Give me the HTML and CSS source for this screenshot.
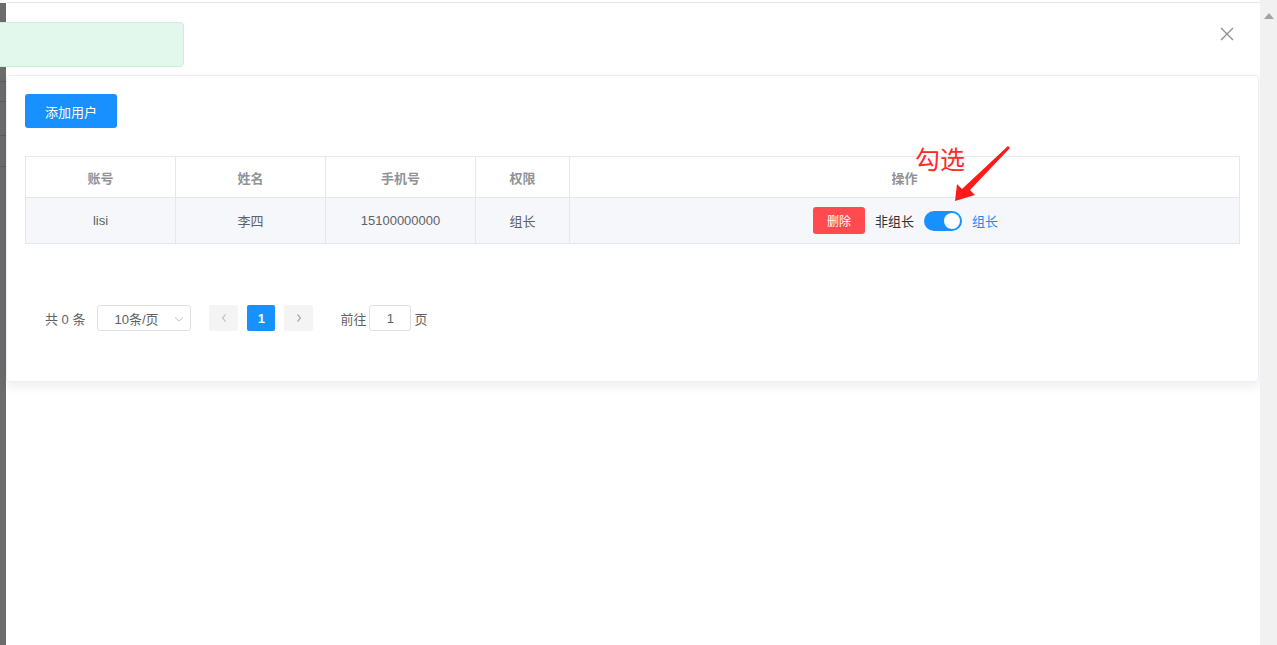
FILE: index.html
```html
<!DOCTYPE html>
<html>
<head>
    <meta charset="utf-8">
    <title>用户管理</title>
    <link rel="stylesheet" href="styles.css">
</head>
<body>
    <div class="edgeStrip">
        <div class="edgeLine" style="height:78px"></div>
        <div class="edgeLine" style="height:19px"></div>
        <div class="edgeLine" style="height:33px"></div>
        <div class="edgeLine" style="height:30px"></div>
    </div>

    <div class="dialog">
        <div class="dialogHeader">
            <span class="closeBtn">
                <svg width="14" height="14" viewBox="0 0 14 14"><path d="M1 1L13 13M13 1L1 13" stroke="#8a8d93" stroke-width="1.3" fill="none"/></svg>
            </span>
        </div>

        <div class="card">
            <button class="btnPrimary">添加用户</button>

            <table class="userTable">
                <tr>
                    <th style="width:149px">账号</th>
                    <th style="width:149px">姓名</th>
                    <th style="width:149px">手机号</th>
                    <th style="width:93px">权限</th>
                    <th>操作</th>
                </tr>
                <tr class="rowStriped">
                    <td>lisi</td>
                    <td>李四</td>
                    <td>15100000000</td>
                    <td>组长</td>
                    <td>
                        <div class="actions">
                            <button class="btnDanger">删除</button>
                            <span class="switchLabel">非组长</span>
                            <span class="switch"><span class="switchKnob"></span></span>
                            <span class="switchLabel active">组长</span>
                        </div>
                    </td>
                </tr>
            </table>

            <div class="pager">
                <span class="pagerTotal">共 0 条</span>
                <span class="pagerSize">10条/页
                    <svg class="pagerArrow" width="10" height="10" viewBox="0 0 10 10"><path d="M1 3.5L5 7L9 3.5" stroke="#c0c4cc" stroke-width="1" fill="none"/></svg>
                </span>
                <span class="pagerBtn">
                    <svg width="8" height="10" viewBox="0 0 8 10"><path d="M5.5 1.5L2.5 5L5.5 8.5" stroke="#c0c4cc" stroke-width="1.2" fill="none"/></svg>
                </span>
                <span class="pagerNum">1</span>
                <span class="pagerBtn">
                    <svg width="8" height="10" viewBox="0 0 8 10"><path d="M2.5 1.5L5.5 5L2.5 8.5" stroke="#a8abb2" stroke-width="1.2" fill="none"/></svg>
                </span>
                <span class="pagerJump">前往 <span class="pagerInput">1</span> 页</span>
            </div>
        </div>
    </div>

    <div class="scrollBar">
        <span class="scrollUp"></span>
    </div>

    <div class="toast"></div>

    <div class="note">勾选</div>
    <svg class="noteArrow" width="70" height="70" viewBox="0 0 70 70">
        <polygon points="57,0 59,2 19,44 24,49 4,55 6,38 11,43" fill="#ff1a1a"/>
    </svg>
</body>
</html>
```

FILE: styles.css
```css
body {
    margin: 0;
    height: 645px;
    display: flex;
    font-family: "Liberation Sans", "Noto Sans CJK SC", sans-serif;
    background: #fff;
    overflow: hidden;
}
.edgeStrip {
    width: 6px;
    margin-top: 3px;
    background-color: #6c6c6c;
}
.edgeLine {
    border-bottom: 1px solid #5c5c5c;
}
.dialog {
    flex: 1;
    margin-top: 2px;
    border-top: 1px solid #e6e6e6;
    background: #fff;
}
.dialogHeader {
    height: 72px;
    display: flex;
    justify-content: flex-end;
    align-items: flex-start;
}
.closeBtn {
    margin: 24px 26px 0 0;
}
.card {
    margin: 0 1px 0 0;
    border: 1px solid #ebeef5;
    border-radius: 4px;
    box-shadow: 0 4px 12px rgba(0, 0, 0, 0.08);
    padding: 18px 18px 50px 18px;
}
.btnPrimary {
    width: 92px;
    height: 34px;
    border: none;
    border-radius: 3px;
    background-color: #1890ff;
    color: #fff;
    font-size: 13px;
    font-family: inherit;
}
.userTable {
    margin-top: 28px;
    width: 100%;
    border-collapse: collapse;
    font-size: 13px;
}
.userTable th, .userTable td {
    border: 1px solid #e4e7ed;
    text-align: center;
    padding: 0;
}
.userTable th {
    height: 40px;
    color: #909399;
    font-weight: bold;
}
.userTable td {
    height: 45px;
    color: #606266;
}
.rowStriped td {
    background-color: #f5f7fa;
}
.actions {
    display: flex;
    align-items: center;
    justify-content: center;
    padding-left: 2px;
}
.btnDanger {
    width: 52px;
    height: 27px;
    border: none;
    border-radius: 3px;
    background-color: #ff4a4f;
    color: #fff;
    font-size: 12px;
    font-family: inherit;
    margin-right: 10px;
}
.switchLabel {
    color: #303133;
    font-size: 13px;
}
.switchLabel.active {
    color: #1890ff;
}
.switch {
    width: 38px;
    height: 20px;
    border-radius: 10px;
    background-color: #1890ff;
    margin: 0 10px;
    display: flex;
    align-items: center;
    justify-content: flex-end;
}
.switchKnob {
    width: 16px;
    height: 16px;
    border-radius: 50%;
    background: #fff;
    margin-right: 2px;
}
.pager {
    margin-top: 61px;
    padding-left: 20px;
    display: flex;
    align-items: center;
    font-size: 13px;
    color: #606266;
}
.pagerTotal {
    margin-right: 12px;
}
.pagerSize {
    border: 1px solid #dcdfe6;
    border-radius: 3px;
    display: flex;
    align-items: center;
    padding-left: 16px;
    box-sizing: border-box;
    width: 94px;
    height: 26px;
    position: relative;
}
.pagerArrow {
    position: absolute;
    right: 6px;
    top: 8px;
}
.pagerBtn {
    width: 29px;
    height: 26px;
    background: #f4f4f5;
    border-radius: 2px;
    display: flex;
    align-items: center;
    justify-content: center;
    margin-left: 18px;
}
.pagerNum {
    width: 28px;
    height: 26px;
    background: #1890ff;
    border-radius: 2px;
    color: #fff;
    font-weight: bold;
    display: flex;
    align-items: center;
    justify-content: center;
    margin-left: 9px;
    margin-right: -9px;
}
.pagerJump {
    margin-left: 27px;
    display: flex;
    align-items: center;
    gap: 2px;
}
.pagerInput {
    width: 42px;
    height: 26px;
    border: 1px solid #dcdfe6;
    border-radius: 3px;
    box-sizing: border-box;
    display: flex;
    align-items: center;
    justify-content: center;
    margin: 0 1px;
}
.scrollBar {
    width: 17px;
    background: #f1f1f1;
    display: flex;
    justify-content: center;
}
.scrollUp {
    margin-top: 13px;
    width: 0;
    height: 0;
    border-left: 5px solid transparent;
    border-right: 5px solid transparent;
    border-bottom: 6px solid #a3a3a3;
}
.toast {
    position: absolute;
    left: -4px;
    top: 22px;
    width: 186px;
    height: 43px;
    background-color: #e3f8ec;
    border: 1px solid #c9efd9;
    border-radius: 4px;
}
.note {
    position: absolute;
    left: 915px;
    top: 140px;
    font-size: 25px;
    color: #ff2a2a;
    font-family: "Noto Sans CJK SC", sans-serif;
}
.noteArrow {
    position: absolute;
    left: 951px;
    top: 146px;
}
```
